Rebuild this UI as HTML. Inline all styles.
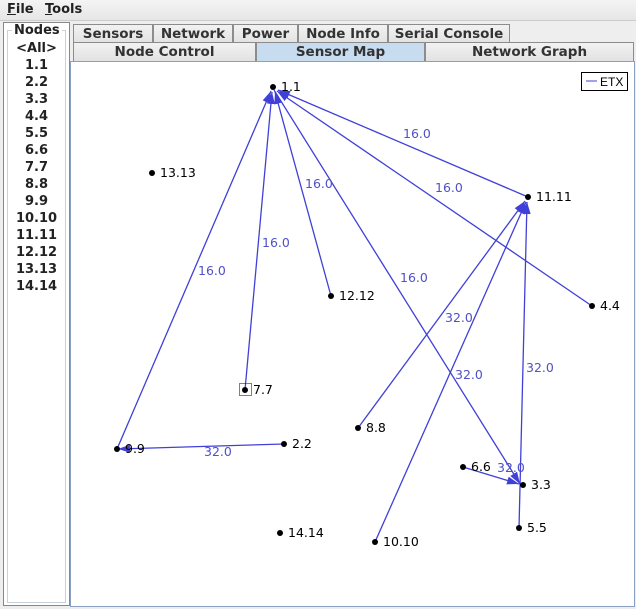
<!DOCTYPE html>
<html><head><style>
*{margin:0;padding:0;box-sizing:border-box}
body{width:636px;height:609px;background:#eeeeee;font-family:"DejaVu Sans","Liberation Sans",sans-serif;position:relative;overflow:hidden;font-size:13px;color:#222}
.menu{position:absolute;left:0;top:0;width:636px;height:21px;background:linear-gradient(#f4f4f4,#e6e6e6);border-bottom:1px solid #ccc}
.menu span{position:absolute;top:2px;font-size:13px;font-weight:bold;color:#222}
.left{position:absolute;left:3px;top:22px;width:67px;height:584px;border:1px solid #888;background:#fff}
.left .in{position:absolute;left:3px;top:7px;width:59px;height:573px;border:1px solid #c6d2dc}
.left .t{position:absolute;left:8px;top:0;background:#fff;font-weight:bold;font-size:13px;padding:0 2px}
.item{position:absolute;left:0;width:65px;text-align:center;font-weight:bold;font-size:13px;color:#222}
.tab{position:absolute;height:19px;border:1px solid #8c8c8c;border-bottom:none;background:linear-gradient(#f2f2f2,#e2e2e2);text-align:center;font-weight:bold;font-size:13.5px;color:#333;line-height:18px}
.sel{background:#c8dcf0}
.map{position:absolute;left:70px;top:61px;width:565px;height:546px;border:1px solid #8aa0c0;background:#fff}
</style></head><body>
<div class="menu"><span style="left:7px"><u>F</u>ile</span><span style="left:45px"><u>T</u>ools</span></div>
<div class="left"><div class="in"></div><div class="t">Nodes</div>
<div class="item" style="top:18px">&lt;All&gt;</div>
<div class="item" style="top:35px">1.1</div>
<div class="item" style="top:52px">2.2</div>
<div class="item" style="top:69px">3.3</div>
<div class="item" style="top:86px">4.4</div>
<div class="item" style="top:103px">5.5</div>
<div class="item" style="top:120px">6.6</div>
<div class="item" style="top:137px">7.7</div>
<div class="item" style="top:154px">8.8</div>
<div class="item" style="top:171px">9.9</div>
<div class="item" style="top:188px">10.10</div>
<div class="item" style="top:205px">11.11</div>
<div class="item" style="top:222px">12.12</div>
<div class="item" style="top:239px">13.13</div>
<div class="item" style="top:256px">14.14</div>
</div>
<div class="tab" style="left:73px;top:24px;width:80px">Sensors</div>
<div class="tab" style="left:153px;top:24px;width:80px">Network</div>
<div class="tab" style="left:233px;top:24px;width:65px">Power</div>
<div class="tab" style="left:298px;top:24px;width:90px">Node Info</div>
<div class="tab" style="left:388px;top:24px;width:122px">Serial Console</div>
<div class="tab" style="left:73px;top:42px;width:183px">Node Control</div>
<div class="tab sel" style="left:256px;top:42px;width:169px">Sensor Map</div>
<div class="tab" style="left:425px;top:42px;width:209px">Network Graph</div>
<div class="map"></div>
<svg style="position:absolute;left:0;top:0" width="636" height="609" font-family="DejaVu Sans,Liberation Sans,sans-serif" font-size="12.5">
<defs><marker id="a" markerWidth="12" markerHeight="8" refX="12" refY="4" orient="auto" markerUnits="userSpaceOnUse"><path d="M0,0L12,4L0,8Z" fill="#4040d8"/></marker></defs>
<g stroke="#4040d8" stroke-width="1.3" fill="none" marker-end="url(#a)">
<line x1="117" y1="449" x2="271" y2="91"/>
<line x1="245" y1="390" x2="272" y2="92"/>
<line x1="331" y1="296" x2="275" y2="92"/>
<line x1="528" y1="197" x2="278" y2="90"/>
<line x1="592" y1="306" x2="277" y2="91"/>
<line x1="274" y1="90" x2="520" y2="484"/>
<line x1="284" y1="444" x2="118" y2="449"/>
<line x1="358" y1="428" x2="525" y2="201"/>
<line x1="375" y1="542" x2="526" y2="202"/>
<line x1="519" y1="528" x2="527" y2="202"/>
<line x1="463" y1="467" x2="519" y2="484"/>
</g>
<g fill="#5050c8">
<text x="198" y="275">16.0</text><text x="262" y="247">16.0</text><text x="305" y="188">16.0</text>
<text x="400" y="282">16.0</text><text x="403" y="138">16.0</text><text x="435" y="192">16.0</text>
<text x="204" y="456">32.0</text><text x="445" y="322">32.0</text><text x="455" y="379">32.0</text>
<text x="526" y="372">32.0</text><text x="497" y="472">32.0</text>
</g>
<g fill="#000">
<circle cx="273" cy="87" r="3"/><circle cx="152" cy="173" r="3"/><circle cx="528" cy="197" r="3"/>
<circle cx="331" cy="296" r="3"/><circle cx="592" cy="306" r="3"/><circle cx="245" cy="390" r="3"/>
<circle cx="358" cy="428" r="3"/><circle cx="117" cy="449" r="3"/><circle cx="284" cy="444" r="3"/>
<circle cx="463" cy="467" r="3"/><circle cx="523" cy="485" r="3"/><circle cx="280" cy="533" r="3"/>
<circle cx="375" cy="542" r="3"/><circle cx="519" cy="528" r="3"/>
<text x="281" y="91">1.1</text><text x="160" y="177">13.13</text><text x="536" y="201">11.11</text>
<text x="339" y="300">12.12</text><text x="600" y="310">4.4</text><text x="253" y="394">7.7</text>
<text x="366" y="432">8.8</text><text x="125" y="453">9.9</text><text x="292" y="448">2.2</text>
<text x="471" y="471">6.6</text><text x="531" y="489">3.3</text><text x="288" y="537">14.14</text>
<text x="383" y="546">10.10</text><text x="527" y="532">5.5</text>
</g>
<rect x="239.5" y="383.5" width="12" height="12" fill="none" stroke="#000" stroke-dasharray="1,1"/>
<rect x="581.5" y="72.5" width="46" height="18" fill="#fff" stroke="#000"/>
<line x1="586" y1="81" x2="597" y2="81" stroke="#4040d8"/>
<text x="600" y="86" fill="#000" font-family="Liberation Sans,sans-serif" font-size="12">ETX</text>
</svg>
</body></html>
